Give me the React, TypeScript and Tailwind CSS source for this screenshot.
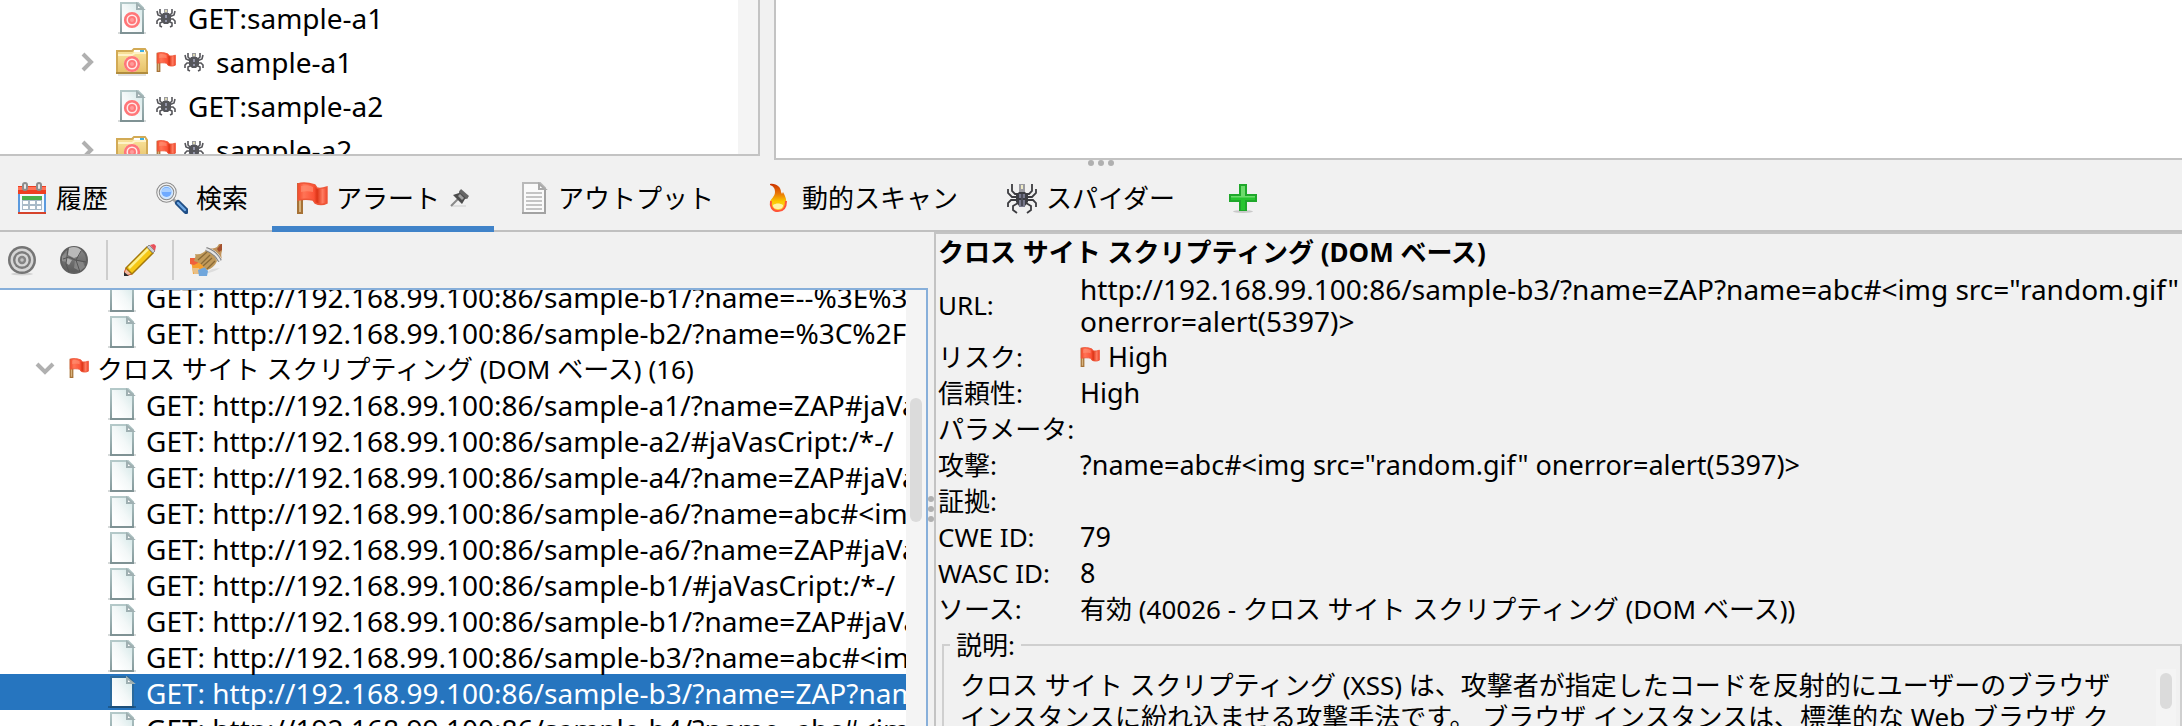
import type { ReactNode } from "react";

const svgBox = "block shrink-0";

function PageIcon({ selected = false, children }: { selected?: boolean; children?: ReactNode }) {
  return (
    <svg viewBox="0 0 32 32" className={`${svgBox} h-8 w-8`} aria-hidden="true">
      <defs>
        <linearGradient id="sheet" x1="1" y1="0" x2="0.2" y2="0.8">
          <stop offset="0" stopColor="#cfe5e5" />
          <stop offset="0.6" stopColor="#f3f8f8" />
          <stop offset="1" stopColor="#ffffff" />
        </linearGradient>
        <linearGradient id="edge" x1="0" y1="0" x2="0" y2="1">
          <stop offset="0" stopColor="#b4c9c9" />
          <stop offset="1" stopColor="#84999b" />
        </linearGradient>
      </defs>
      <path d="M2 31h28" stroke={selected ? "#1c5a90" : "#d6dada"} strokeWidth="2" />
      <path
        d="M5 1h17l5 5v25H5z"
        fill="url(#sheet)"
        stroke={selected ? "#2b6a9c" : "url(#edge)"}
        strokeWidth="2"
      />
      <path d="M4 31h24" stroke={selected ? "#1d4f78" : "#7f9294"} strokeWidth="2" />
      <path d="M21 2v5h6z" fill="#ffffff" stroke="#9fb0b2" strokeWidth="2" />
      {children}
    </svg>
  );
}

function Bullseye() {
  return (
    <g fill="none" stroke="#ff7678">
      <circle cx="16" cy="18" r="8" fill="#ffe9e9" stroke="none" />
      <circle cx="16" cy="18" r="6.8" strokeWidth="2.6" />
      <circle cx="16" cy="18" r="3" strokeWidth="2" fill="#ff9c9c" />
    </g>
  );
}

function TargetPageIcon() {
  return (
    <PageIcon>
      <Bullseye />
    </PageIcon>
  );
}

function TargetFolderIcon() {
  return (
    <svg viewBox="0 0 32 32" className={`${svgBox} h-8 w-8`} aria-hidden="true">
      <defs>
        <linearGradient id="folder" x1="0" y1="0" x2="0" y2="1">
          <stop offset="0" stopColor="#fbe6a0" />
          <stop offset="1" stopColor="#e6c067" />
        </linearGradient>
      </defs>
      <path d="M2 29h28" stroke="#e2e2e2" strokeWidth="2" />
      <path d="M1 5h15l2-2h11l2 3v21H1z" fill="url(#folder)" stroke="#d2aa55" strokeWidth="2" />
      <path d="M18 5h11" stroke="#fff" strokeWidth="2" />
      <path d="M24 5h4" stroke="#3fb0e0" strokeWidth="2" />
      <path d="M2 9h14l3-2h11" stroke="#fff3c8" strokeWidth="2" fill="none" />
      <path d="M0 27h32" stroke="#b08c3e" strokeWidth="2" />
      <Bullseye />
    </svg>
  );
}

function FlagIcon({ size = "h-5 w-5" }: { size?: string }) {
  return (
    <svg viewBox="0 0 32 32" className={`${svgBox} ${size}`} aria-hidden="true">
      <defs>
        <linearGradient id="flag" x1="0" y1="0" x2="1" y2="0">
          <stop offset="0" stopColor="#f4482a" />
          <stop offset="0.2" stopColor="#ff7456" />
          <stop offset="0.55" stopColor="#fc5236" />
          <stop offset="0.66" stopColor="#dc3416" />
          <stop offset="0.85" stopColor="#ff7d62" />
          <stop offset="1" stopColor="#ee452a" />
        </linearGradient>
      </defs>
      <path d="M2 2h4v29H2z" fill="#d8b27c" stroke="#a67236" strokeWidth="2" />
      <path
        d="M2 2c5-2 11-1 17 1l2 3c4 1 7 0 10-1v16c-4 2-8 2-12 0l-2-3c-5-1-9-1-15 0z"
        fill="url(#flag)"
        stroke="#ee5638"
        strokeWidth="1.4"
      />
      <path d="M5 4c4-1 8-1 12 1v5c-4-1-8-1-12 0z" fill="#ff9478" opacity="0.6" />
    </svg>
  );
}

function SmallSpiderIcon() {
  return (
    <svg viewBox="0 0 20 20" className={`${svgBox} h-5 w-5`} aria-hidden="true">
      <g fill="none" stroke="#55555a" strokeWidth="1.600">
        <path d="M7 8 4 5V1M7 9 2 7 1 3M7 11H3l-2 2v3M8 13l-4 2v3l2 1" />
        <path d="m13 8 3-3V1M13 9l5-2 1-4M13 11h4l2 2v3M12 13l4 2v3l-2 1" />
      </g>
      <path d="M7 5h6l2 3v5l-3 3H8l-3-3V8z" fill="#55565b" />
      <path d="M8 1h4v4H8z" fill="#9a9a9e" />
      <path d="M9 2h2v2H9z" fill="#dcd8b4" />
      <path d="M9 7h2v3H9zM9 12h2v2H9z" fill="#9294a8" />
    </svg>
  );
}

function SpiderIcon() {
  return (
    <svg viewBox="0 0 32 32" className={`${svgBox} h-8 w-8`} aria-hidden="true">
      <g fill="none" stroke="#3c3c40" strokeWidth="1.800">
        <path d="M12 12H9L6 9V2M12 15H6l-4-4V7M12 18H5l-3 3v4M12 21l-5 3v4l4 3" />
        <path d="M20 12h3l3-3V2M20 15h6l4-4V7M20 18h7l3 3v4M20 21l5 3v4l-4 3" />
      </g>
      <path d="M13 10h6l3 3v7l-3 4h-6l-3-4v-7z" fill="#3c3d42" />
      <path d="M13 2h6v8h-6z" fill="#9c9ca2" />
      <path d="M15 3h2v4h-2z" fill="#f0ecc6" />
      <path d="M13 12h6v4h-6zM13 18h6v7h-6z" fill="#77788c" />
      <path d="M15 12h2v12h-2z" fill="#4b4c58" />
    </svg>
  );
}

function CalendarIcon() {
  return (
    <svg viewBox="0 0 32 32" className={`${svgBox} h-8 w-8`} aria-hidden="true">
      <path d="M3 10h26v21H3z" fill="#f4f9ff" stroke="#5b9ade" strokeWidth="2" />
      <path d="M2 4h28v8H2z" fill="#ee3f22" />
      <path d="M2 5h28v3H2z" fill="#ff7358" />
      <path d="M2 31h28" stroke="#d6442c" strokeWidth="2" />
      <path d="M6 14h20v4H6z" fill="#4ab04a" />
      <path d="M6 18h20v10H6z" fill="#a9bac8" />
      <path d="M7 19h5v3H7zM14 19h5v3h-5zM21 19h4v3h-4zM7 24h5v3H7zM14 24h5v3h-5zM21 24h4v3h-4z" fill="#fff" />
      <g fill="#e8e8e8" stroke="#8d8d8d" strokeWidth="2">
        <rect x="7" y="1" width="4" height="7" rx="2" />
        <rect x="21" y="1" width="4" height="7" rx="2" />
      </g>
    </svg>
  );
}

function SearchIcon() {
  return (
    <svg viewBox="0 0 32 32" className={`${svgBox} h-8 w-8`} aria-hidden="true">
      <path d="m17 17 5 5" stroke="#a8a8a8" strokeWidth="3" />
      <path d="m22 21 8 8" stroke="#1f4e86" strokeWidth="6" strokeLinecap="round" />
      <path d="m22 21 7 7" stroke="#6ea8e4" strokeWidth="2.4" strokeLinecap="round" />
      <circle cx="10.500" cy="10.500" r="8.500" fill="#cfe6ff" stroke="#8c8c8c" strokeWidth="3.500" />
      <circle cx="10.500" cy="10.500" r="8.500" fill="none" stroke="#f2f2f2" strokeWidth="1.500" />
      <circle cx="10.500" cy="10" r="5" fill="#6faaff" />
      <path d="M6 8c2-3 7-3 9 0v2H6z" fill="#a8cfff" />
    </svg>
  );
}

function PinIcon() {
  return (
    <svg viewBox="0 0 20 20" className={`${svgBox} h-5 w-5`} aria-hidden="true">
      <path d="M2 18h14" stroke="#d8d8d8" strokeWidth="1.500" />
      <path d="m1 18 7-7" stroke="#8a8a8a" strokeWidth="2" />
      <path d="m10 2 8 8-3 1-3 5-9-9 6-2z" fill="#4c4c4c" />
      <path d="m11 1 8 7-2 3-8-7z" fill="#666" />
      <path d="m10 6 4 4-2 2-4-4z" fill="#a2a2a2" />
    </svg>
  );
}

function TextPageIcon() {
  return (
    <svg viewBox="0 0 32 32" className={`${svgBox} h-8 w-8`} aria-hidden="true">
      <path d="M5 1h17l5 5v25H5z" fill="#fafafa" stroke="#b9b9b9" strokeWidth="2" />
      <path d="M4 31h24M27 8v24" stroke="#a2a2a2" strokeWidth="2" />
      <path d="M21 2v5h6z" fill="#fff" stroke="#a9a9a9" strokeWidth="2" />
      <path d="M8 11h16M8 15h16M8 19h16M8 23h16M8 27h16" stroke="#c4c4c4" strokeWidth="2" />
    </svg>
  );
}

function FlameIcon() {
  return (
    <svg viewBox="0 0 32 32" className={`${svgBox} h-8 w-8`} aria-hidden="true">
      <defs>
        <linearGradient id="flame" x1="0" y1="0" x2="0" y2="1">
          <stop offset="0" stopColor="#cc3300" />
          <stop offset="0.35" stopColor="#e87406" />
          <stop offset="0.65" stopColor="#fbc800" />
          <stop offset="1" stopColor="#ffd83a" />
        </linearGradient>
      </defs>
      <path
        d="M8 2c6-1 11 3 11 8l1 2 1-2c2 4 4 7 3 12-1 4-4 7-8 7s-8-3-8-8c0-4 5-6 5-11 0-4-2-6-5-7z"
        fill="url(#flame)"
      />
      <path d="M9 19c-1 5 1 10 7 10s8-5 8-10" fill="none" stroke="#ff5538" strokeWidth="2" />
      <path d="M11 23c3-2 7-2 10 0 0 3-2 4-5 4s-5-1-5-4z" fill="#fff3a8" />
    </svg>
  );
}

function PlusIcon() {
  return (
    <svg viewBox="0 0 32 32" className={`${svgBox} h-8 w-8`} aria-hidden="true">
      <ellipse cx="16" cy="29.500" rx="10" ry="1.500" fill="#c9c9c9" />
      <path d="M12 2h8v10h10v8H20v9h-8v-9H2v-8h10z" fill="#1fa82b" />
      <path d="M14 4h4v10h10v4H18v10h-4V18H4v-4h10z" fill="#27c52f" />
      <path d="M14 4h4v10h10v1.500H4V14h10z" fill="#6ddb6c" />
    </svg>
  );
}

function ScopeIcon() {
  return (
    <svg viewBox="0 0 32 32" className={`${svgBox} h-8 w-8`} aria-hidden="true">
      <ellipse cx="16" cy="30" rx="11" ry="1.500" fill="#d2d2d2" />
      <circle cx="16" cy="16" r="14" fill="#757575" />
      <circle cx="16" cy="16" r="11.500" fill="#d6d6d6" />
      <circle cx="16" cy="16" r="9" fill="#7c7c7c" />
      <circle cx="16" cy="16" r="6.600" fill="#d6d6d6" />
      <circle cx="16" cy="16" r="4.200" fill="#858585" />
      <circle cx="16" cy="16" r="1.800" fill="#c4c4c4" />
    </svg>
  );
}

function GlobeIcon() {
  return (
    <svg viewBox="0 0 32 32" className={`${svgBox} h-8 w-8`} aria-hidden="true">
      <defs>
        <linearGradient id="globe" x1="0" y1="0" x2="0" y2="1">
          <stop offset="0" stopColor="#8a8a8a" />
          <stop offset="1" stopColor="#595959" />
        </linearGradient>
      </defs>
      <circle cx="16" cy="16" r="13" fill="url(#globe)" stroke="#606060" strokeWidth="2" />
      <path d="M11 4c5-2 9-1 12 2l-2 6-5 2-6-3z" fill="#b9b9b9" />
      <path d="m4 12 4-3 3 5-2 4-5-1z" fill="#8c8c8c" />
      <path d="m8 14 6 2-3 5-3-2z" fill="#b0b0b0" />
      <path d="m17 16 8 2 2 5-5 4-6-3z" fill="#858585" />
      <path d="m5 15 6-2 6 3 11 2M10 5 8 20l3 8M23 7l-5 9 4 12" stroke="#555555" strokeWidth="1" fill="none" />
    </svg>
  );
}

function PencilIcon() {
  return (
    <svg viewBox="0 0 32 32" className={`${svgBox} h-8 w-8`} aria-hidden="true">
      <path d="m2 24 6 6-7 2H0v-3z" fill="#f2b9a0" stroke="#d0522e" strokeWidth="1" />
      <path d="M0 28v4h5z" fill="#2c2c2c" />
      <path d="M2 24 23 3l6 6L8 30z" fill="#f6c715" stroke="#a4780a" strokeWidth="1.500" />
      <path d="M5 24 24 5" stroke="#fdf08a" strokeWidth="2.500" />
      <path d="m23 3 2-2 6 6-2 2z" fill="#c9cdd2" stroke="#8d8d8d" strokeWidth="1" />
      <path d="m26 1 4-1 2 2-1 5z" fill="#e8505a" />
    </svg>
  );
}

function BroomIcon() {
  return (
    <svg viewBox="0 0 32 32" className={`${svgBox} h-8 w-8`} aria-hidden="true">
      <path d="M14 30c6-1 12-3 16-6l-8 1z" fill="#dddddd" />
      <path d="M0 14h7l9 9-7 7H3l-1-8z" fill="#f5a02e" />
      <path d="M0 14h6l2 5-4 2-4-1z" fill="#f0603c" />
      <path d="M2 24h7l2 6H4z" fill="#e8bf86" />
      <path d="m8 26 7-3 3 4-1 5H9z" fill="#70a6dc" />
      <path d="M17 5c4 3 8 7 10 12-2 5-6 8-10 9-4-5-8-8-13-9 1-3 2-5 1-7 5 1 9-1 12-5z" fill="#c09a5c" />
      <path d="m17 8-9 8M20 11l-9 9M22 14l-9 8M25 17l-8 8" stroke="#8a6a36" strokeWidth="1.300" />
      <path d="M16 5c6 2 11 6 14 12" stroke="#808080" strokeWidth="4" fill="none" />
      <path d="M16 5c6 2 11 6 14 12" stroke="#e6e6e6" strokeWidth="2" fill="none" />
      <path d="M20 4c3 1 5 0 7-1l2-3h3v7c-1 3-1 5 0 8-3-5-7-9-12-11z" fill="#c0935a" />
      <path d="m27 5 4-5h1v6l-3 2z" fill="#a4502e" />
    </svg>
  );
}

function Chevron({ open = false }: { open?: boolean }) {
  return (
    <svg viewBox="0 0 20 20" className={`${svgBox} h-5 w-5`} aria-hidden="true">
      <path
        d={open ? "M2 6l8 8 8-8" : "M5 2l8 8-8 8"}
        fill="none"
        stroke="#b0b0b0"
        strokeWidth="4"
      />
    </svg>
  );
}

const sites = [
  { folder: false, label: "GET:sample-a1" },
  { folder: true, label: "sample-a1" },
  { folder: false, label: "GET:sample-a2" },
  { folder: true, label: "sample-a2" },
];

const host = "GET: http://192.168.99.100:86";
const before = ["/sample-b1/?name=--%3E%3", "/sample-b2/?name=%3C%2Fs"];
const domAlerts = [
  "/sample-a1/?name=ZAP#jaVa",
  "/sample-a2/#jaVasCript:/*-/",
  "/sample-a4/?name=ZAP#jaVa",
  "/sample-a6/?name=abc#<im",
  "/sample-a6/?name=ZAP#jaVa",
  "/sample-b1/#jaVasCript:/*-/",
  "/sample-b1/?name=ZAP#jaVa",
  "/sample-b3/?name=abc#<im",
  "/sample-b3/?name=ZAP?nam",
  "/sample-b4/?name=abc#<im",
];
const selectedAlert = 8;

function AlertRow({ path, selected = false }: { path: string; selected?: boolean }) {
  return (
    <li
      className={`flex h-9 items-center gap-2 pl-[106px] whitespace-nowrap ${
        selected ? "bg-[#2675bf] text-white" : ""
      }`}
    >
      <PageIcon selected={selected} />
      <span className="min-w-0 flex-1 overflow-hidden pt-0.5 text-[28px]">{host + path}</span>
    </li>
  );
}

const tabs: { label: string; icon: ReactNode; active?: boolean }[] = [
  { label: "履歴", icon: <CalendarIcon /> },
  { label: "検索", icon: <SearchIcon /> },
  { label: "アラート", icon: <FlagIcon size="h-8 w-8" />, active: true },
  { label: "アウトプット", icon: <TextPageIcon /> },
  { label: "動的スキャン", icon: <FlameIcon /> },
  { label: "スパイダー", icon: <SpiderIcon /> },
];

const details: { label: string; value: ReactNode; latin?: boolean }[] = [
  {
    label: "リスク:",
    latin: true,
    value: (
      <span className="flex items-center gap-2">
        <FlagIcon />
        High
      </span>
    ),
  },
  { label: "信頼性:", value: "High", latin: true },
  { label: "パラメータ:", value: "" },
  { label: "攻撃:", value: '?name=abc#<img src="random.gif" onerror=alert(5397)>', latin: true },
  { label: "証拠:", value: "" },
  { label: "CWE ID:", value: "79", latin: true },
  { label: "WASC ID:", value: "8", latin: true },
  { label: "ソース:", value: "有効 (40026 - クロス サイト スクリプティング (DOM ベース))" },
];

function Dots({ vertical = false }: { vertical?: boolean }) {
  return (
    <span className={`flex gap-1 ${vertical ? "flex-col" : ""}`} aria-hidden="true">
      <i className="h-1.5 w-1.5 rounded-full bg-[#b0b0b0]" />
      <i className="h-1.5 w-1.5 rounded-full bg-[#b0b0b0]" />
      <i className="h-1.5 w-1.5 rounded-full bg-[#b0b0b0]" />
    </span>
  );
}

export default function App() {
  return (
    <div className="flex h-screen flex-col overflow-hidden bg-[#f1f1f1] font-['Noto_Sans','Noto_Sans_CJK_JP',sans-serif] text-[26px] leading-[36px] text-black">
      <div className="flex h-40 shrink-0">
        <nav className="flex h-39 w-[760px] shrink-0 overflow-hidden border-r-2 border-b-2 border-[#c3c3c3] bg-white">
          <ul className="-mt-1 flex-1 pl-[78px]">
            {sites.map((site) => (
              <li key={site.label} className="flex h-11 items-center gap-2 whitespace-nowrap">
                <span className="-mr-0.5 flex w-8 shrink-0">{site.folder && <Chevron />}</span>
                {site.folder ? <TargetFolderIcon /> : <TargetPageIcon />}
                {site.folder && <FlagIcon />}
                <SmallSpiderIcon />
                <span className="pl-1 text-[28px]">{site.label}</span>
              </li>
            ))}
          </ul>
          <div className="w-5 bg-[#f4f4f4]" />
        </nav>
        <div className="ml-3.5 flex-1 border-b-2 border-l-2 border-[#c3c3c3] bg-white" />
      </div>

      <div className="relative flex h-18 shrink-0 items-stretch border-b-2 border-[#c0c0c0]">
        <span className="absolute inset-x-0 top-0 flex justify-center pl-5">
          <Dots />
        </span>
        <div role="tablist" className="-mb-0.5 flex">
          {tabs.map((tab, i) => (
            <button
              key={tab.label}
              type="button"
              role="tab"
              aria-selected={!!tab.active}
              className={`flex items-center gap-2 whitespace-nowrap ${i === 0 ? "pr-6 pl-4" : "px-6"} ${
                tab.active ? "border-b-6 border-[#4083c9] pt-2.5" : "pt-1"
              }`}
            >
              {tab.icon}
              {tab.label}
              {tab.active && (
                <span className="pl-0.5">
                  <PinIcon />
                </span>
              )}
            </button>
          ))}
          <button type="button" aria-label="+" className="flex items-center px-7 pt-1">
            <PlusIcon />
          </button>
        </div>
      </div>

      <div className="flex min-h-0 flex-1">
        <section className="flex w-[928px] shrink-0 flex-col">
          <div className="flex h-14 shrink-0 items-center pl-1.5">
            <button type="button" aria-label="Scope">
              <ScopeIcon />
            </button>
            <button type="button" aria-label="Sites" className="ml-5">
              <GlobeIcon />
            </button>
            <span className="mx-4 h-10 w-0.5 bg-[#cdcdcd]" />
            <button type="button" aria-label="Edit">
              <PencilIcon />
            </button>
            <span className="mx-4 h-10 w-0.5 bg-[#cdcdcd]" />
            <button type="button" aria-label="Clear">
              <BroomIcon />
            </button>
          </div>
          <div className="flex min-h-0 flex-1 overflow-hidden border-t-2 border-r-2 border-[#87afda] bg-white">
            <ul className="-mt-3 min-w-0 flex-1 overflow-hidden">
              {before.map((path) => (
                <AlertRow key={path} path={path} />
              ))}
              <li className="flex h-9 items-center gap-2 pl-[35px] whitespace-nowrap">
                <Chevron open />
                <span className="pl-1.5">
                  <FlagIcon />
                </span>
                <span className="pt-0.5">クロス サイト スクリプティング (DOM ベース) (16)</span>
              </li>
              {domAlerts.map((path, i) => (
                <AlertRow key={path} path={path} selected={i === selectedAlert} />
              ))}
            </ul>
            <div className="w-5 shrink-0 bg-[#f4f4f4] px-1 pt-27">
              <div className="h-31 rounded-full bg-[#dbdbdb]" />
            </div>
          </div>
        </section>

        <div className="flex w-1.5 shrink-0 flex-col items-center pt-66">
          <Dots vertical />
        </div>

        <section className="flex min-w-0 flex-1 flex-col border-t-2 border-l-2 border-[#c3c3c3]">
          <h1 className="pl-0.5 font-bold">クロス サイト スクリプティング (DOM ベース)</h1>
          <dl className="pl-0.5">
            <div className="flex h-[69px] items-center">
              <dt className="w-[142px] shrink-0">URL:</dt>
              <dd className="text-[28px] leading-8 whitespace-nowrap">
                http://192.168.99.100:86/sample-b3/?name=ZAP?name=abc#&lt;img src="random.gif"
                <br />
                onerror=alert(5397)&gt;
              </dd>
            </div>
            {details.map((d) => (
              <div key={d.label} className="flex h-9 items-center whitespace-nowrap">
                <dt className="w-[142px] shrink-0">{d.label}</dt>
                <dd className={d.latin ? "text-[27px]" : ""}>{d.value}</dd>
              </div>
            ))}
          </dl>
          <fieldset className="mx-0 ml-1.5 min-h-0 flex-1 border-2 border-b-0 border-[#cfcfcf]">
            <legend className="ml-1.5 px-1.5">説明:</legend>
            <div className="flex w-full pt-1.5">
              <p className="min-w-0 flex-1 pl-4 leading-8 whitespace-nowrap">
                クロス サイト スクリプティング (XSS) は、攻撃者が指定したコードを反射的にユーザーのブラウザ
                <br />
                インスタンスに紛れ込ませる攻撃手法です。 ブラウザ インスタンスは、標準的な Web ブラウザ ク
              </p>
              <div className="mr-1 h-20 w-5 shrink-0 bg-[#f4f4f4] px-1 pt-1">
                <div className="h-9 rounded-full bg-[#dbdbdb]" />
              </div>
            </div>
          </fieldset>
        </section>
      </div>
    </div>
  );
}
